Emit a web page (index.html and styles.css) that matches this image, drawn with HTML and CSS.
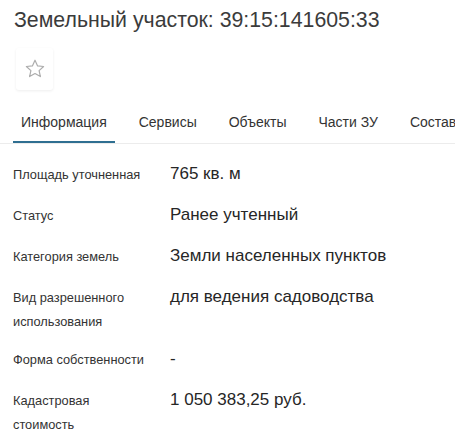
FILE: index.html
```html
<!DOCTYPE html>
<html lang="ru">
<head>
<meta charset="utf-8">
<title>Земельный участок</title>
<link rel="stylesheet" href="styles.css">
</head>
<body>
<div class="page">
  <h1 class="title">Земельный участок: 39:15:141605:33</h1>
  <div class="actions">
    <button class="fav-btn" type="button" aria-label="В избранное">
      <svg class="star" width="20" height="19" viewBox="0 0 20 19">
        <path d="M10 1.2 L12.6 6.9 L18.6 7.5 L14.1 11.6 L15.4 17.6 L10 14.5 L4.6 17.6 L5.9 11.6 L1.4 7.5 L7.4 6.9 Z" fill="none" stroke="#adadad" stroke-width="1.2" stroke-linejoin="round"/>
      </svg>
    </button>
  </div>
  <nav class="tabs">
    <a class="tab active">Информация</a>
    <a class="tab">Сервисы</a>
    <a class="tab">Объекты</a>
    <a class="tab">Части ЗУ</a>
    <a class="tab">Состав</a>
  </nav>
  <div class="info">
    <div class="row">
      <div class="label">Площадь уточненная</div>
      <div class="value">765 кв. м</div>
    </div>
    <div class="row">
      <div class="label">Статус</div>
      <div class="value">Ранее учтенный</div>
    </div>
    <div class="row">
      <div class="label">Категория земель</div>
      <div class="value">Земли населенных пунктов</div>
    </div>
    <div class="row">
      <div class="label">Вид разрешенного использования</div>
      <div class="value">для ведения садоводства</div>
    </div>
    <div class="row">
      <div class="label">Форма собственности</div>
      <div class="value">-</div>
    </div>
    <div class="row">
      <div class="label">Кадастровая стоимость</div>
      <div class="value">1 050 383,25 руб.</div>
    </div>
  </div>
</div>
</body>
</html>
```

FILE: styles.css
```css
html, body {
  margin: 0;
  padding: 0;
  background: #ffffff;
}

body {
  font-family: "Liberation Sans", Arial, sans-serif;
  color: #333333;
  overflow: hidden;
}

.page {
  width: 455px;
}

.title {
  margin: 0;
  padding: 8px 0 0 14px;
  font-size: 21.3px;
  line-height: 24px;
  font-weight: normal;
  color: #3b3b3b;
  white-space: nowrap;
}

.actions {
  display: flex;
  padding: 16px 0 0 16px;
}

.fav-btn {
  width: 37px;
  height: 42px;
  padding: 0;
  border: none;
  border-radius: 3px;
  background: #ffffff;
  box-shadow: 0 1px 3px rgba(0, 0, 0, 0.07);
  display: flex;
  align-items: center;
  justify-content: center;
}

.star {
  display: block;
  margin-top: -2px;
}

.tabs {
  display: flex;
  gap: 16px;
  margin-top: 12px;
  padding-left: 13px;
  border-bottom: 1px solid #ececec;
  white-space: nowrap;
  overflow: hidden;
}

.tab {
  display: block;
  padding: 10px 8px 9px;
  font-size: 14px;
  line-height: 20px;
  color: #333333;
  border-bottom: 2px solid transparent;
  flex: none;
}

.tab.active {
  border-bottom-color: #2f6f91;
}

.info {
  padding-top: 9px;
}

.row {
  display: flex;
  align-items: baseline;
  gap: 21px;
  padding: 4.5px 0 4.5px 13px;
}

.label {
  width: 136px;
  flex: none;
  font-size: 12.8px;
  line-height: 24px;
  color: #333333;
}

.value {
  font-size: 17px;
  line-height: 32px;
  color: #262626;
}
```
